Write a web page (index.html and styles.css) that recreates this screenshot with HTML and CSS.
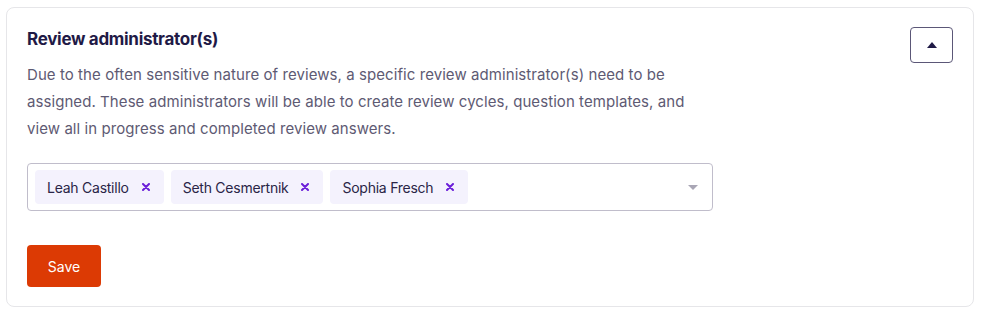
FILE: index.html
```html
<!DOCTYPE html>
<html lang="en">
<head>
  <meta charset="UTF-8">
  <title>Review administrators</title>
  <link rel="stylesheet" href="styles.css">
</head>
<body>
  <section class="card">
    <div class="card-head">
      <div class="card-main">
        <h2 class="title">Review administrator(s)</h2>
        <p class="desc">
          Due to the often sensitive nature of reviews, a specific review administrator(s) need to be<br>
          assigned. These administrators will be able to create review cycles, question templates, and<br>
          view all in progress and completed review answers.
        </p>
      </div>
      <button class="toggle" aria-label="Collapse">
        <svg width="10" height="6" viewBox="0 0 10 6"><path d="M0 6 L5 0 L10 6 Z" fill="#1f1a46"/></svg>
      </button>
    </div>

    <div class="select">
      <div class="chips">
        <span class="chip">Leah Castillo <svg class="chip-x" width="8" height="8" viewBox="0 0 8 8"><path d="M1 1 L7 7 M7 1 L1 7" stroke="#6b1fd9" stroke-width="2" stroke-linecap="round"/></svg></span>
        <span class="chip">Seth Cesmertnik <svg class="chip-x" width="8" height="8" viewBox="0 0 8 8"><path d="M1 1 L7 7 M7 1 L1 7" stroke="#6b1fd9" stroke-width="2" stroke-linecap="round"/></svg></span>
        <span class="chip">Sophia Fresch <svg class="chip-x" width="8" height="8" viewBox="0 0 8 8"><path d="M1 1 L7 7 M7 1 L1 7" stroke="#6b1fd9" stroke-width="2" stroke-linecap="round"/></svg></span>
      </div>
      <svg class="caret" width="10" height="5" viewBox="0 0 10 5"><path d="M0 0 L10 0 L5 5 Z" fill="#a9a6b5"/></svg>
    </div>

    <button class="save">Save</button>
  </section>
</body>
</html>
```

FILE: styles.css
```css
body { margin: 0; background: #fff; font-family: Inter, "Noto Sans", sans-serif; }
.card {
  margin: 7px 8px 6px 6px;
  border: 1px solid #e6e6e9;
  border-radius: 8px;
  padding: 19px 20px 19px 20px;
  height: 300px;
  box-sizing: border-box;
}
.card-head { display: flex; justify-content: space-between; align-items: flex-start; }
.title { margin: 2px 0 0 0; font-size: 17px; font-weight: 700; color: #1f1a46; letter-spacing: -0.3px; }
.desc { margin: 12px 0 0 0; font-size: 15px; line-height: 27px; color: #5e5a73; letter-spacing: 0.07px; white-space: nowrap; }
.toggle {
  width: 43px; height: 36px;
  border: 1px solid #5b5777;
  border-radius: 4px;
  background: #fff;
  display: flex; align-items: center; justify-content: center;
  padding: 0;
}
.select {
  margin-top: 21px;
  width: 686px; height: 48px;
  box-sizing: border-box;
  border: 1px solid #c0bdcb;
  border-radius: 4px;
  display: flex; align-items: center; justify-content: space-between;
  padding: 0 14px 0 7px;
}
.chips { display: flex; gap: 7px; }
.chip {
  background: #f4f2fd;
  border-radius: 4px;
  height: 34px;
  padding: 0 14px 0 12px;
  display: flex; align-items: center;
  font-size: 14px; color: #2a2547;
  letter-spacing: -0.25px;
}
.chip-x { margin-left: 13px; }
.save {
  margin-top: 34px;
  width: 74px; height: 42px;
  background: #dc3a04;
  color: #fff;
  border: none; border-radius: 4px;
  font-family: Inter, "Noto Sans", sans-serif;
  font-size: 14px;
}
```
